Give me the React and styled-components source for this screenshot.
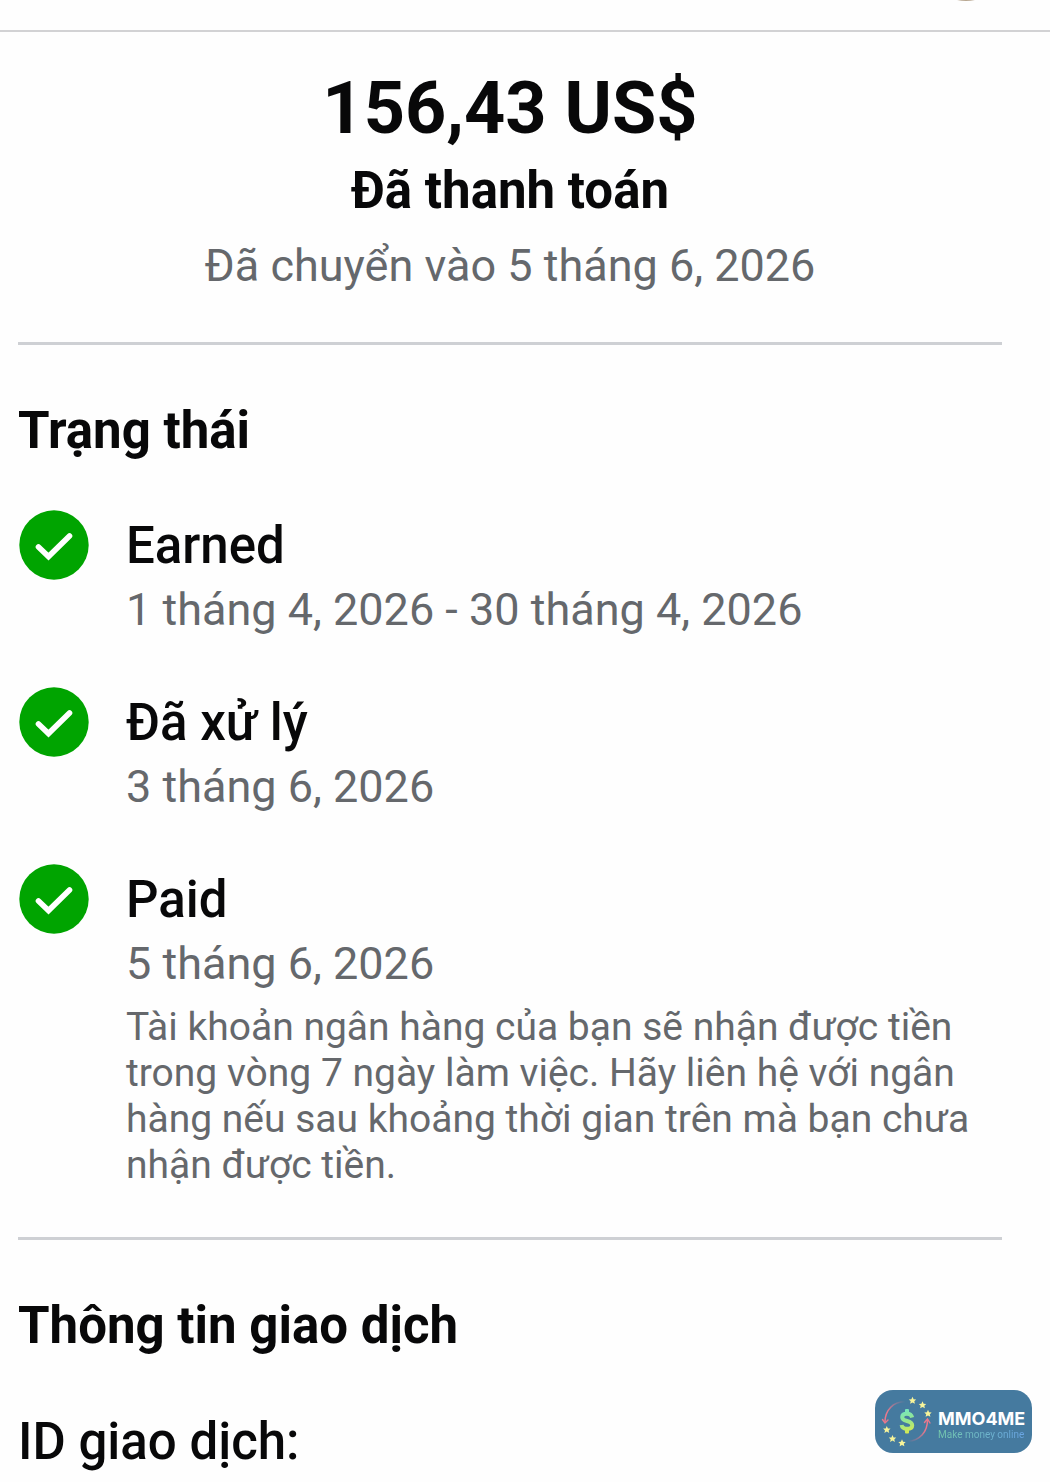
import styled, { createGlobalStyle } from 'styled-components';

const steps = [
  { title: 'Earned', date: '1 tháng 4, 2026 - 30 tháng 4, 2026' },
  { title: 'Đã xử lý', date: '3 tháng 6, 2026' },
  {
    title: 'Paid',
    date: '5 tháng 6, 2026',
    note:
      'Tài khoản ngân hàng của bạn sẽ nhận được tiền trong vòng 7 ngày làm việc. Hãy liên hệ với ngân hàng nếu sau khoảng thời gian trên mà bạn chưa nhận được tiền.',
  },
];

const stars = [
  [37.5, 10.5],
  [47.5, 15],
  [53, 23.5],
  [11.8, 39.7],
  [17.5, 48.7],
  [27, 53],
];

const CheckIcon = () => (
  <Check viewBox="0 0 72 72" aria-hidden="true">
    <circle cx="36" cy="36" r="34.7" fill="#00a400" />
    <path d="M20.5 38 L30.5 47.5 L51.5 27" fill="none" stroke="#fff" strokeWidth="5.6" strokeLinecap="round" />
  </Check>
);

const BadgeLogo = () => (
  <Logo viewBox="0 0 63 63" aria-hidden="true">
    <defs>
      <linearGradient id="dollar" gradientUnits="userSpaceOnUse" x1="28" y1="20" x2="36" y2="43">
        <stop offset="0" stopColor="#74e6c0" />
        <stop offset="0.5" stopColor="#98e68c" />
        <stop offset="1" stopColor="#dcea4c" />
      </linearGradient>
      <linearGradient id="arcLeft" x1="0" y1="1" x2="1" y2="0">
        <stop offset="0.3" stopColor="#e8788c" />
        <stop offset="1" stopColor="#e8788c" stopOpacity="0" />
      </linearGradient>
      <linearGradient id="arcRight" x1="1" y1="0" x2="0" y2="1">
        <stop offset="0.3" stopColor="#e8788c" />
        <stop offset="1" stopColor="#e8788c" stopOpacity="0" />
      </linearGradient>
    </defs>
    <path d="M30 11.5 C18 12 10 20 10 32" fill="none" stroke="url(#arcLeft)" strokeWidth="1.5" />
    <path d="M7.5 29.5 L10 33 L13 30" fill="none" stroke="#e8788c" strokeWidth="1.4" strokeLinecap="round" />
    <path d="M33 51.5 C45 50 52.5 42 52.5 30" fill="none" stroke="url(#arcRight)" strokeWidth="1.5" />
    <path d="M49.5 32.5 L52.5 29 L55 33" fill="none" stroke="#e8788c" strokeWidth="1.4" strokeLinecap="round" />
    <path
      d="M37.2 27.5 C36.5 25 34.5 23.8 32 23.8 C29 23.8 27.2 25.2 27.2 27.2 C27.2 29.6 29.5 30.3 32 31 C34.8 31.8 37.2 32.7 37.2 35.2 C37.2 37.6 35 38.8 32 38.8 C29 38.8 27 37.4 26.6 35"
      fill="none"
      stroke="url(#dollar)"
      strokeWidth="4"
    />
    <rect x="30" y="19" width="4" height="5" rx="1" fill="url(#dollar)" />
    <rect x="30" y="38.5" width="4" height="5" rx="1" fill="url(#dollar)" />
    {stars.map(([x, y]) => (
      <path
        key={`${x}-${y}`}
        transform={`translate(${x} ${y})`}
        d="M0 -3.8 L1.1 -1.3 L3.7 -1.1 L1.8 0.7 L2.4 3.3 L0 1.9 L-2.4 3.3 L-1.8 0.7 L-3.7 -1.1 L-1.1 -1.3 Z"
        fill="#f7f49a"
      />
    ))}
  </Logo>
);

const App = () => {
  return (
    <>
      <GlobalStyle />
      <Header>
        <Avatar />
      </Header>
      <Main>
        <Summary>
          <Amount>156,43 US$</Amount>
          <State>Đã thanh toán</State>
          <Muted>Đã chuyển vào 5 tháng 6, 2026</Muted>
        </Summary>
        <Section>
          <Heading>Trạng thái</Heading>
          <Steps>
            {steps.map((step) => (
              <Step key={step.title}>
                <CheckIcon />
                <div>
                  <StepTitle>{step.title}</StepTitle>
                  <Muted>{step.date}</Muted>
                  {step.note && <Note>{step.note}</Note>}
                </div>
              </Step>
            ))}
          </Steps>
        </Section>
        <Section>
          <Heading>Thông tin giao dịch</Heading>
          <Label>ID giao dịch:</Label>
        </Section>
      </Main>
      <Badge>
        <BadgeLogo />
        <BadgeBody>
          <BadgeName>MMO4ME</BadgeName>
          <BadgeText>Make money online</BadgeText>
        </BadgeBody>
      </Badge>
    </>
  );
};

const GlobalStyle = createGlobalStyle`
  * {
    box-sizing: border-box;
  }

  body {
    margin: 0;
    background-color: #fefefe;
    color: #080809;
    font-family: Roboto, 'Liberation Sans', sans-serif;
  }

  h1, h2, h3, p, ul {
    margin: 0;
    padding: 0;
  }
`;

const Header = styled.header`
  display: flex;
  justify-content: flex-end;
  align-items: flex-end;
  height: 32px;
  padding: 0 44px 29px;
  border-bottom: 2px solid #d2d2d4;
  overflow: hidden;
`;

const Avatar = styled.div`
  flex-shrink: 0;
  width: 80px;
  height: 80px;
  border-radius: 50%;
  background-color: #b9a892;
`;

const Main = styled.main`
  padding: 0 48px 0 18px;
`;

const Summary = styled.section`
  padding: 35px 0 49px;
  text-align: center;
`;

const Amount = styled.h1`
  margin-bottom: 9px;
  font-size: 72px;
  line-height: 84px;
  font-weight: 700;
`;

const State = styled.p`
  margin-bottom: 17px;
  font-size: 51px;
  line-height: 62px;
  font-weight: 700;
`;

const Muted = styled.p`
  color: #65686c;
  font-size: 45px;
  line-height: 54px;
`;

const Section = styled.section`
  padding: 55px 0 49px;
  border-top: 3px solid #ced0d4;

  &:last-child {
    padding-bottom: 0;
  }
`;

const Heading = styled.h2`
  font-size: 51px;
  line-height: 62px;
  font-weight: 700;
`;

const Steps = styled.ul`
  display: flex;
  flex-direction: column;
  gap: 49px;
  margin-top: 47px;
  list-style: none;
`;

const Step = styled.li`
  display: flex;
  gap: 36px;
`;

const Check = styled.svg`
  flex-shrink: 0;
  width: 72px;
  height: 72px;
`;

const StepTitle = styled.h3`
  font-size: 51px;
  line-height: 74px;
  font-weight: 500;
`;

const Note = styled.p`
  margin-top: 13px;
  color: #65686c;
  font-size: 39px;
  line-height: 46px;
`;

const Label = styled.p`
  margin-top: 54px;
  font-size: 51px;
  line-height: 62px;
  font-weight: 500;
`;

const Badge = styled.aside`
  position: fixed;
  right: 18px;
  bottom: 29px;
  display: flex;
  align-items: center;
  width: 157px;
  height: 63px;
  border-radius: 18px;
  background-color: #457a9f;
  white-space: nowrap;
`;

const Logo = styled.svg`
  flex-shrink: 0;
  width: 63px;
  height: 63px;
`;

const BadgeBody = styled.div`
  padding-top: 7px;
`;

const BadgeName = styled.p`
  color: #ffffff;
  font-family: Inter, sans-serif;
  font-size: 18px;
  line-height: 20px;
  font-weight: 700;
`;

const BadgeText = styled.p`
  background-image: linear-gradient(90deg, #74c9ac, #6aa5e6);
  background-clip: text;
  color: transparent;
  font-size: 10px;
  line-height: 12px;
`;

export default App;
